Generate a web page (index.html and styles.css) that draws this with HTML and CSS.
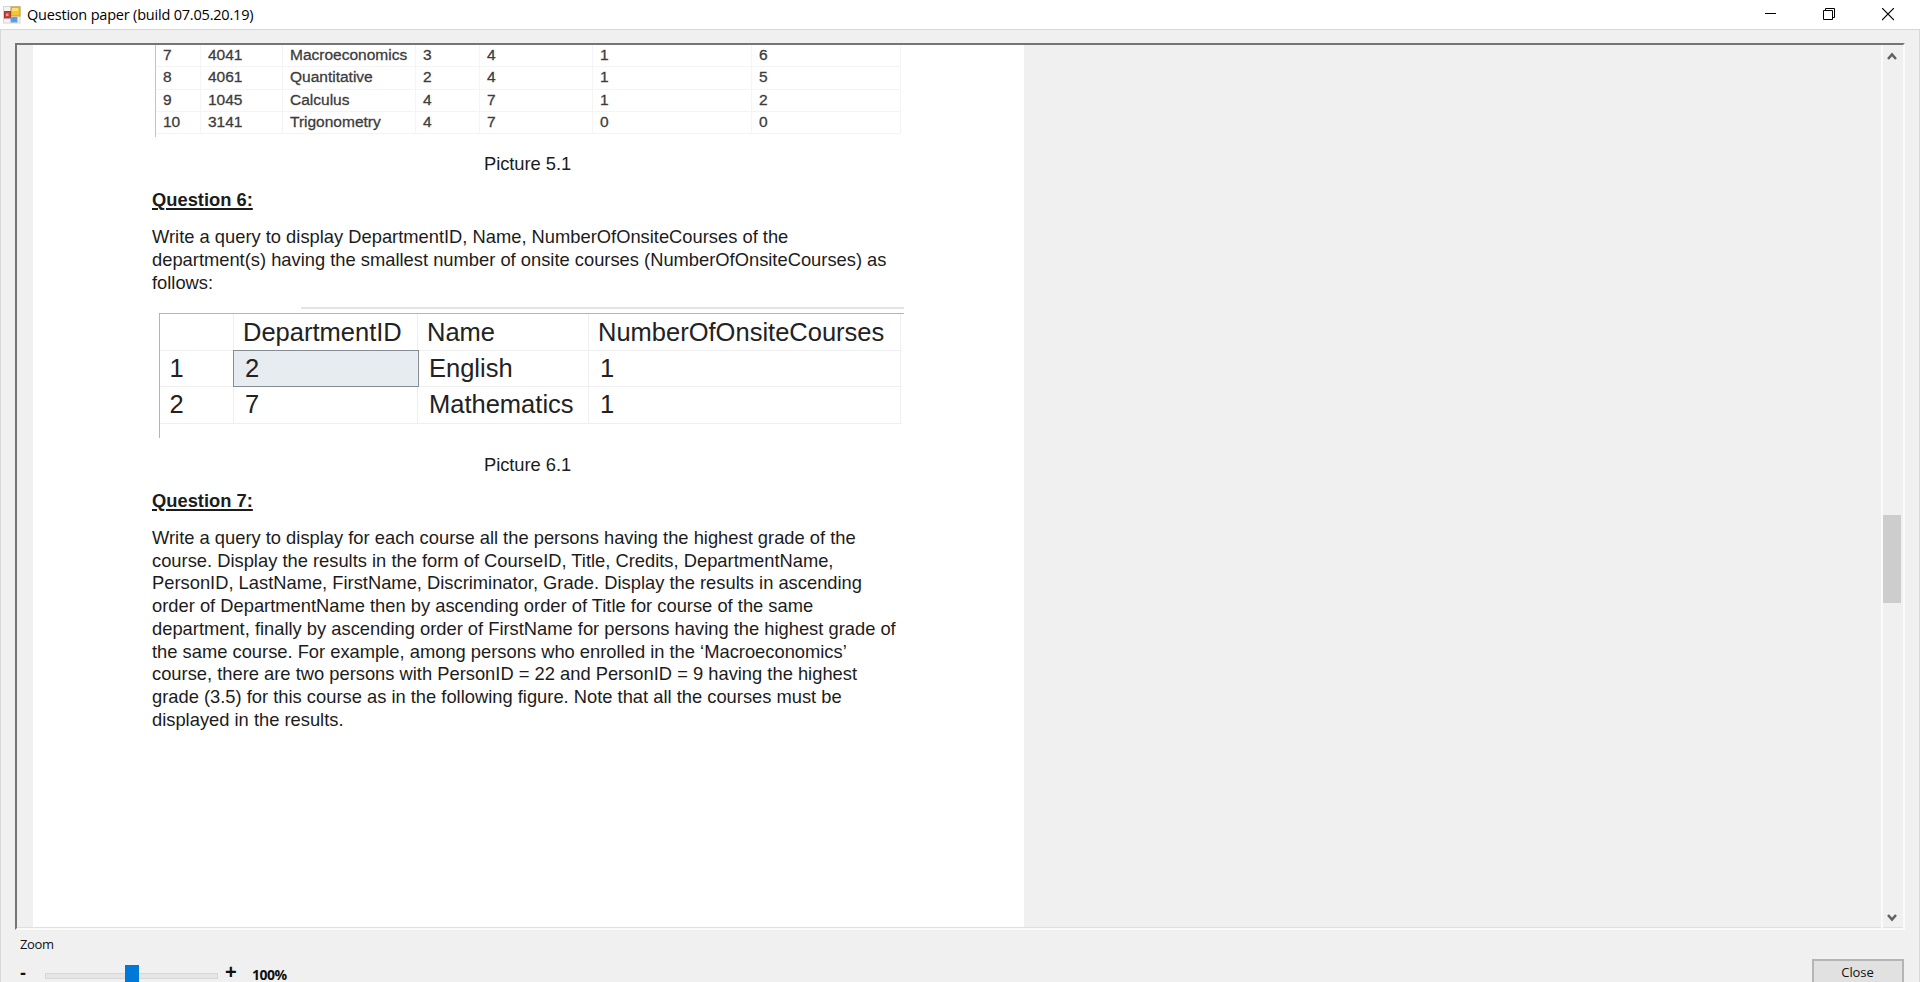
FILE: index.html
```html
<!DOCTYPE html>
<html lang="en">
<head>
<meta charset="utf-8">
<title>Question paper</title>
<link rel="stylesheet" href="styles.css">
</head>
<body>
<div class="window">
  <header class="titlebar">
    <svg class="app-icon" width="18" height="18" viewBox="0 0 18 18">
      <rect x=".5" y=".5" width="16.500" height="16.500" fill="#f3f3f6" stroke="#d3d4da"/>
      <rect x="8" y="1" width="9" height="9" fill="#f3c62f" stroke="#c99a2a"/>
      <rect x="9" y="2" width="6" height="3" fill="#fbe074"/>
      <rect x="1.500" y="5.500" width="6" height="6.500" fill="#cf3d35" stroke="#9c3c3c"/>
      <rect x="3" y="7.500" width="2.500" height="2.500" fill="#ee9a8c"/>
      <rect x="8" y="11.500" width="6" height="4.500" fill="#5b9be6" stroke="#6f9fdc"/>
    </svg>
    <h1 class="title">Question paper (build 07.05.20.19)</h1>
    <div class="controls">
      <svg width="12" height="13" viewBox="0 0 12 13"><path d="M1 5.500H12" stroke="#000" fill="none"/></svg>
      <svg width="12" height="13" viewBox="0 0 12 13"><path d="M.5 2.500H9.500V11.500H.5ZM2.500 2V.5H11.500V9.500H10" stroke="#000" fill="none"/></svg>
      <svg width="12" height="13" viewBox="0 0 12 13"><path d="M0 0L12 12M12 0L0 12" stroke="#000" stroke-width="1.200" fill="none"/></svg>
    </div>
  </header>
  <main class="viewer">
    <article class="page">
      <div class="grid5">
        <div class="row5"><span>7</span><span>4041</span><span>Macroeconomics</span><span>3</span><span>4</span><span>1</span><span>6</span></div>
        <div class="row5"><span>8</span><span>4061</span><span>Quantitative</span><span>2</span><span>4</span><span>1</span><span>5</span></div>
        <div class="row5"><span>9</span><span>1045</span><span>Calculus</span><span>4</span><span>7</span><span>1</span><span>2</span></div>
        <div class="row5"><span>10</span><span>3141</span><span>Trigonometry</span><span>4</span><span>7</span><span>0</span><span>0</span></div>
      </div>
      <p class="caption cap5">Picture 5.1</p>
      <h2>Question 6:</h2>
      <p class="para">Write a query to display DepartmentID, Name, NumberOfOnsiteCourses of the<br>department(s) having the smallest number of onsite courses (NumberOfOnsiteCourses) as<br>follows:</p>
      <div class="rule"></div>
      <div class="grid6">
        <div class="row6 head"><span></span><span>DepartmentID</span><span>Name</span><span>NumberOfOnsiteCourses</span></div>
        <div class="row6"><span>1</span><span class="selected">2</span><span>English</span><span>1</span></div>
        <div class="row6"><span>2</span><span>7</span><span>Mathematics</span><span>1</span></div>
      </div>
      <p class="caption cap6">Picture 6.1</p>
      <h2>Question 7:</h2>
      <p class="para">Write a query to display for each course all the persons having the highest grade of the<br>course. Display the results in the form of CourseID, Title, Credits, DepartmentName,<br>PersonID, LastName, FirstName, Discriminator, Grade. Display the results in ascending<br>order of DepartmentName then by ascending order of Title for course of the same<br>department, finally by ascending order of FirstName for persons having the highest grade of<br>the same course. For example, among persons who enrolled in the ‘Macroeconomics’<br>course, there are two persons with PersonID = 22 and PersonID = 9 having the highest<br>grade (3.5) for this course as in the following figure. Note that all the courses must be<br>displayed in the results.</p>
    </article>
    <div class="scrollbar">
      <svg width="12" height="10" viewBox="0 0 12 10"><path d="M2 8L6 3.500L10 8" stroke="#606060" stroke-width="2.500" fill="none"/></svg>
      <div class="thumb"></div>
      <svg width="12" height="10" viewBox="0 0 12 10"><path d="M2 2L6 6.500L10 2" stroke="#606060" stroke-width="2.500" fill="none"/></svg>
    </div>
  </main>
  <footer class="footer">
    <div class="zoom">
      <div class="zoom-label">Zoom</div>
      <div class="zoom-row">
        <span class="minus">-</span>
        <div class="track"><div class="handle"></div></div>
        <span class="plus">+</span>
        <span class="percent">100%</span>
      </div>
    </div>
    <button class="close"><span>Close</span></button>
  </footer>
</div>
</body>
</html>
```

FILE: styles.css
```css
* { box-sizing: border-box; margin: 0; padding: 0; }
body { width: 1920px; height: 982px; overflow: hidden; background: #f0f0f0; }
.window { height: 982px; display: flex; flex-direction: column; overflow: hidden; box-shadow: inset 1px 0 0 #d8d8d8, inset -1px 0 0 #d8d8d8; }

.titlebar { flex: 0 0 30px; display: flex; align-items: center; padding: 0 26px 0 3px; background: #fff; border-bottom: 1px solid #d5d8d8; }
.app-icon { flex: none; margin-right: 6px; }
.title { font: 400 14.5px/28px "Open Sans", sans-serif; letter-spacing: -.2px; color: #000; white-space: nowrap; }
.controls { margin-left: auto; display: flex; gap: 47px; }
.controls svg { display: block; }

.viewer { flex: 0 0 887px; margin: 13px 15px 0; display: flex; border: solid; border-width: 2px; border-color: #747674 #fafafa #fafafa #747674; box-shadow: inset 0 -1px 0 #e0e0e0; overflow: hidden; }
.page { width: 991px; height: 882px; margin-left: 16px; padding-left: 119px; background: #fff; color: #1c1c1c; font: 18.33px/22.75px "Liberation Sans", Arial, sans-serif; white-space: nowrap; overflow: hidden; }
.scrollbar { margin-left: auto; width: 22px; padding: 6px 2px 5px 0; border-left: 2px solid #fafafa; display: flex; flex-direction: column; align-items: center; }
.scrollbar svg { display: block; flex: none; }
.thumb { width: 18px; height: 88px; background: #cdcdcd; margin: 454px 0 auto; }

.grid5 { width: 746px; height: 92px; margin-left: 3px; border-left: 1px solid #c3c3c3; overflow: hidden; font-size: 15.5px; line-height: 19.500px; color: #3c3c3c; -webkit-text-stroke: .3px #3c3c3c; }
.row5 { height: 22.3px; display: grid; grid-template-columns: 45px 82px 133px 64px 113px 159px 149px; border-bottom: 1px solid #f4f4f4; }
.row5 span { padding-left: 7px; border-right: 1px solid #f4f4f4; }

.caption { height: 22.75px; padding-left: 332px; letter-spacing: -.05px; }
.cap5 { margin-top: 16px; }
h2 { margin-top: 13.500px; height: 22.75px; font-size: 18.33px; line-height: 22.75px; font-weight: 700; text-decoration: underline; text-decoration-thickness: 2px; text-underline-offset: 2px; }
.para { margin-top: 14px; }

.rule { width: 603px; height: 2px; margin: 13px 0 4px 149px; background: #e4e4e4; }
.grid6 { width: 745px; height: 125px; margin-left: 7px; border-left: 1px solid #b4b4b4; border-top: 1px solid #b4b4b4; font-size: 25.5px; line-height: 34px; color: #222; }
.row6 { width: 742px; height: 36.5px; display: grid; grid-template-columns: 74px 184px 171px 312px; border-bottom: 1px solid #efefef; }
.row6 span { padding-left: 11px; border-right: 1px solid #efefef; }
.row6 span:first-child { padding-left: 9.500px; }
.row6.head span { padding-left: 9px; line-height: 36px; }
.row6 .selected { background: #e7ecf1; outline: 1px solid #858c94; }
.cap6 { margin-top: 15.500px; }

.footer { flex: 1; display: flex; justify-content: space-between; padding: 0 16px 0 20px; color: #111; }
.zoom-label { margin-top: 4px; font: 13px/20px "Open Sans", sans-serif; letter-spacing: -.4px; }
.zoom-row { display: flex; align-items: flex-start; margin-top: 9px; height: 18px; }
.minus { width: 25px; margin-top: 1px; font: 700 18px/18px "Liberation Sans", sans-serif; }
.track { width: 173px; height: 6px; margin-top: 10px; background: #e5e5e5; border: 1px solid #d6d6d6; position: relative; }
.handle { position: absolute; left: 79px; top: -9px; width: 14px; height: 18px; background: #0078d7; }
.plus { width: 34px; padding-left: 7px; font: 700 20px/18px "Liberation Sans", sans-serif; }
.percent { margin-top: 6px; font: 700 14px/12px "Open Sans", sans-serif; letter-spacing: -.5px; }
.close { width: 92px; height: 40px; margin-top: 29px; background: #e1e1e1; border: 2px solid #b5b5b5; font: 13px/18px "Open Sans", sans-serif; letter-spacing: -.1px; color: #111; display: flex; justify-content: center; padding: 2px 1px 0 0; }
```
